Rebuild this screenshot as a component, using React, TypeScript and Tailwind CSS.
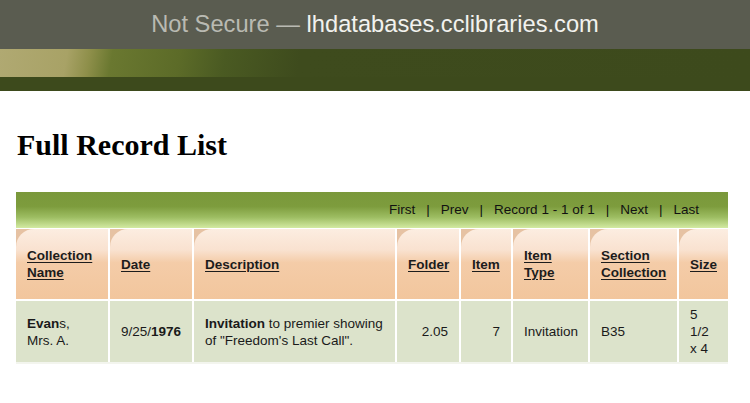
import React from "react";

const cols = "grid-cols-[92px_82px_201px_62px_50px_75px_87px_49px]";

const headers: { label: React.ReactNode }[] = [
  { label: <>Collection<br />Name</> },
  { label: "Date" },
  { label: "Description" },
  { label: "Folder" },
  { label: "Item" },
  { label: <>Item<br />Type</> },
  { label: <>Section<br />Collection</> },
  { label: "Size" },
];

const HeaderCell: React.FC<{ children: React.ReactNode }> = ({ children }) => (
  <div className="h-full bg-[#e6c2a3]">
    <div className="flex h-full items-center rounded-tl-[18px] bg-[linear-gradient(to_bottom,#fcede1_0%,#f9e2d0_30%,#f4cca8_48%,#f2c69d_100%)] pl-[11px] pr-1">
      <span className="font-bold text-[#1c1c1c] underline underline-offset-2 leading-[17px]">{children}</span>
    </div>
  </div>
);

const DataCell: React.FC<{ children: React.ReactNode; right?: boolean }> = ({ children, right }) => (
  <div className={`flex h-full items-center bg-[#dce3cb] px-[11px] leading-[17px] ${right ? "justify-end" : ""}`}>
    <div>{children}</div>
  </div>
);

export default function App() {
  return (
    <div className="min-h-[403px] w-[750px] bg-white font-['Liberation_Sans',Arial,sans-serif] text-[13.5px] text-[#1a1a1a]">
      {/* browser chrome */}
      <div className="flex h-[49px] items-center justify-center bg-[#5a5c50] pt-[1px] text-[23.7px] font-['Liberation_Sans',Arial,sans-serif]">
        <span className="text-[#b9bab2]">Not Secure —&nbsp;</span>
        <span className="text-[#f2f2ee]">lhdatabases.cclibraries.com</span>
      </div>

      {/* site banner */}
      <div className="flex h-[42px] flex-col bg-[#3d4a1c]">
        <div className="h-[28px] bg-[linear-gradient(100deg,#b0a972_0%,#a8a266_9%,#8e8f4a_12%,#6a7830_15%,#5c6b28_24%,#4a5a22_30%,#3e4b1d_40%,#3d4a1c_100%)]" />
      </div>

      <h1 className="mt-[37px] pl-[17px] font-['Liberation_Serif','Times_New_Roman',serif] text-[30px] font-bold leading-[34px] text-black">
        Full Record List
      </h1>

      <div className="ml-4 mt-[30px] w-[712px]">
        {/* pager */}
        <div className="flex h-[36px] items-center justify-end bg-[linear-gradient(to_bottom,#7a983b_0%,#7d9c3d_40%,#9dbd62_70%,#d3eaa2_100%)] pr-[29px] text-[#111]">
          <span>First</span>
          <span className="px-[11px]">|</span>
          <span>Prev</span>
          <span className="px-[11px]">|</span>
          <span>Record 1 - 1 of 1</span>
          <span className="px-[11px]">|</span>
          <span>Next</span>
          <span className="px-[11px]">|</span>
          <span>Last</span>
        </div>

        {/* header row */}
        <div className={`mt-[1px] grid h-[70px] ${cols} gap-x-[2px]`}>
          {headers.map((h, i) => (
            <HeaderCell key={i}>{h.label}</HeaderCell>
          ))}
        </div>

        {/* data row */}
        <div className={`mt-[2px] grid h-[61px] ${cols} gap-x-[2px]`}>
          <DataCell>
            <b>Evan</b>s,
            <br />
            Mrs. A.
          </DataCell>
          <DataCell>
            9/25/<b>1976</b>
          </DataCell>
          <DataCell>
            <b>Invitation</b> to premier showing
            <br />
            of "Freedom's Last Call".
          </DataCell>
          <DataCell right>2.05</DataCell>
          <DataCell right>7</DataCell>
          <DataCell>Invitation</DataCell>
          <DataCell>B35</DataCell>
          <DataCell>
            5<br />1/2<br />x 4
          </DataCell>
        </div>
        <div className="h-[2px] bg-[#f3f5ee]" />
      </div>
    </div>
  );
}
